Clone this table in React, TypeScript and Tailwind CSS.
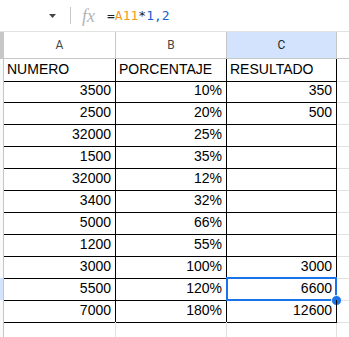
const rows: [string, string, string][] = [
  ["3500", "10%", "350"],
  ["2500", "20%", "500"],
  ["32000", "25%", ""],
  ["1500", "35%", ""],
  ["32000", "12%", ""],
  ["3400", "32%", ""],
  ["5000", "66%", ""],
  ["1200", "55%", ""],
  ["3000", "100%", "3000"],
  ["5500", "120%", "6600"],
  ["7000", "180%", "12600"],
];

const SELECTED_ROW = 9;

const cellFont = { fontFamily: '"Liberation Sans", Arial, sans-serif' };

function FormulaBar() {
  return (
    <div className="flex h-[32px] items-center border-b border-[#e1e3e1] bg-white">
      <svg className="ml-[49px] h-[4px] w-[7px]" viewBox="0 0 7 4">
        <path d="M0 0h7L3.5 4z" fill="#444746" />
      </svg>
      <div className="ml-[14px] h-[17px] w-px bg-[#c7c7c7]" />
      <span
        className="ml-[11px] text-[18px] italic leading-none text-[#b4b4b4]"
        style={{ fontFamily: '"Liberation Serif", serif' }}
      >
        fx
      </span>
      <span
        className="ml-[12px] text-[13px] leading-none"
        style={{ fontFamily: '"DejaVu Sans Mono", monospace' }}
      >
        <span className="text-[#1f1f1f]">=</span>
        <span className="text-[#f29b1f]">A11</span>
        <span className="text-[#1f1f1f]">*</span>
        <span className="text-[#1a5fd0]">1,2</span>
      </span>
    </div>
  );
}

function ColumnHeaders() {
  return (
    <div
      className="grid h-[27px] grid-cols-[4px_112px_111px_110px_1fr] border-b border-[#c4c7c5] text-[12px] text-[#444746]"
      style={{ fontFamily: 'Roboto, "Liberation Sans", sans-serif' }}
    >
      <div className="border-r border-[#c4c7c5] bg-[#c7c7c7]" />
      <div className="flex items-center justify-center border-r border-[#c4c7c5]">A</div>
      <div className="flex items-center justify-center border-r border-[#c4c7c5]">B</div>
      <div className="flex items-center justify-center border-r border-[#c4c7c5] bg-[#d3e3fd] text-[#0b57d0]">
        <span className="text-[#1f1f1f]">C</span>
      </div>
      <div className="border-[#c4c7c5]" />
    </div>
  );
}

function Row({
  cells,
  height,
  left,
  selected,
}: {
  cells: [string, string, string];
  height: string;
  left?: boolean;
  selected?: boolean;
}) {
  const align = left ? "justify-start pl-[3px]" : "justify-end pr-[4px]";
  return (
    <div className={`grid grid-cols-[4px_112px_111px_110px_1fr] ${height}`}>
      <div className={`border-r border-b border-[#c4c7c5] ${selected ? "bg-[#d3e3fd]" : "bg-[#f8f9fa]"}`} />
      <div className={`flex items-end border-r border-b border-black pb-[1px] ${align}`}>{cells[0]}</div>
      <div className={`flex items-end border-r border-b border-black pb-[1px] ${align}`}>{cells[1]}</div>
      <div className={`relative flex items-end border-r border-b border-black pb-[1px] ${align}`}>
        {cells[2]}
        {selected && (
          <>
            <div className="absolute -top-[1px] -left-[1px] -right-[1px] -bottom-[1px] border-2 border-[#1a73e8]" />
            <div className="absolute -right-[6px] -bottom-[6px] h-[11px] w-[11px] rounded-full border border-white bg-[#1a73e8]" />
          </>
        )}
      </div>
      <div className="border-b border-[#e1e1e1]" />
    </div>
  );
}

export default function App() {
  return (
    <div className="h-[337px] w-[349px] overflow-hidden bg-white">
      <FormulaBar />
      <ColumnHeaders />
      <div className="text-[14px] text-black" style={cellFont}>
        <Row cells={["NUMERO", "PORCENTAJE", "RESULTADO"]} height="h-[21px]" left />
        {rows.map((r, i) => (
          <Row key={i} cells={r} height="h-[22px]" selected={i === SELECTED_ROW} />
        ))}
        <div className="grid h-[22px] grid-cols-[4px_112px_111px_110px_1fr]">
          <div className="border-r border-[#c4c7c5] bg-[#f8f9fa]" />
          <div className="border-r border-[#e1e1e1]" />
          <div className="border-r border-[#e1e1e1]" />
          <div className="border-r border-[#e1e1e1]" />
          <div />
        </div>
      </div>
    </div>
  );
}
